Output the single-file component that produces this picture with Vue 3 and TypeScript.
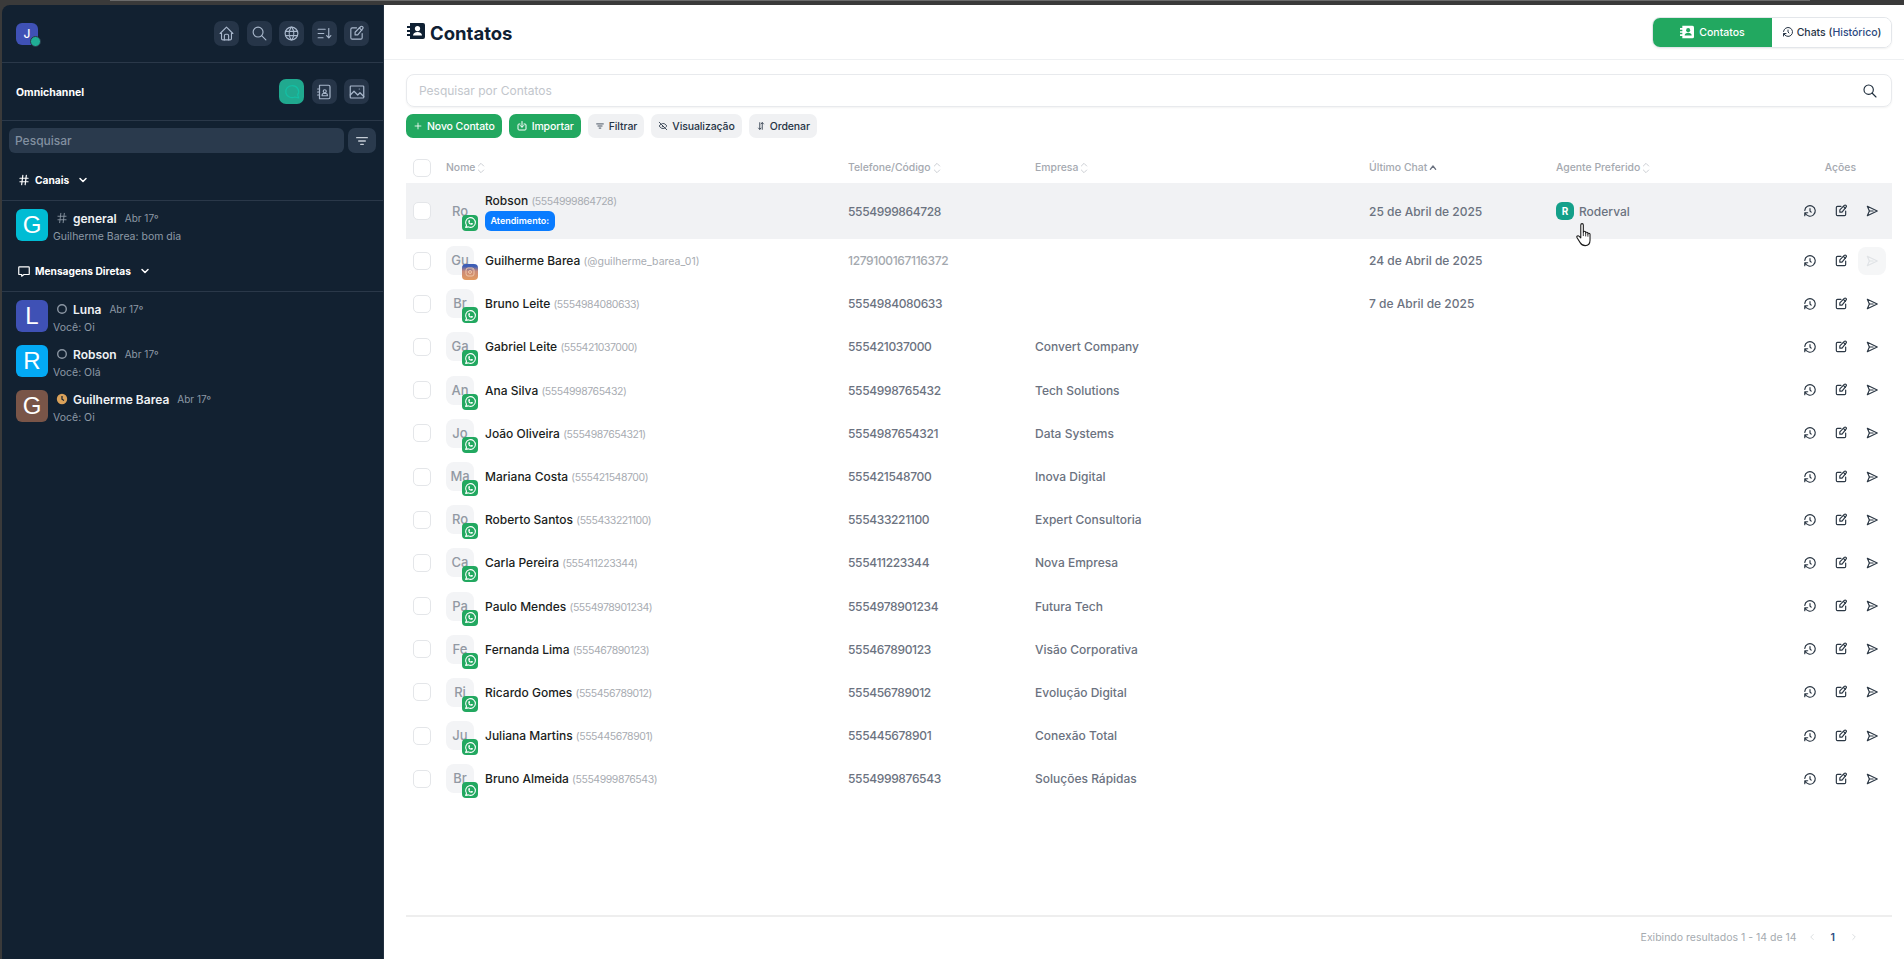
<template>
  <div class="app">
    <aside class="sidebar">
      <div class="side-top">
        <div class="logo">J<span class="logo-dot"></span></div>
        <div class="icon-btns">
          <button v-for="n in topIcons" :key="n" class="side-btn"><Icon :name="n" class="i17" /></button>
        </div>
      </div>
      <div class="side-mode">
        <span class="mode-title">Omnichannel</span>
        <div class="icon-btns">
          <button class="side-btn active"><Icon name="bubble" class="i18" /></button>
          <button class="side-btn"><Icon name="book" class="i18" /></button>
          <button class="side-btn"><Icon name="image" class="i18" /></button>
        </div>
      </div>
      <div class="side-search">
        <div class="side-input">Pesquisar</div>
        <button class="side-filter"><Icon name="filter" class="i16" /></button>
      </div>
      <div class="section-head">
        <Icon name="hash" class="i14" /><span>Canais</span><Icon name="chevron" class="i12 chev" />
      </div>
      <div class="conv-list channel">
        <div class="conv">
          <div class="conv-avatar" style="background: #00bcd4">G</div>
          <div class="conv-text">
            <div class="conv-line"><Icon name="hash" class="i14 conv-hash" /><b>general</b><em>Abr 17º</em></div>
            <div class="conv-sub">Guilherme Barea: bom dia</div>
          </div>
        </div>
      </div>
      <div class="section-head dm">
        <Icon name="comment" class="i14" /><span>Mensagens Diretas</span><Icon name="chevron" class="i12 chev" />
      </div>
      <div class="conv-list">
        <div v-for="c in directs" :key="c.name" class="conv">
          <div class="conv-avatar" :style="{ background: c.color }">{{ c.name[0] }}</div>
          <div class="conv-text">
            <div class="conv-line">
              <svg v-if="c.away" class="status" viewBox="0 0 12 12"><circle cx="6" cy="6" r="5.2" fill="#d9a15a" /><path d="M6 3v3.2l2 1.2" fill="none" stroke="#122131" stroke-width="1.2" /></svg>
              <svg v-else class="status" viewBox="0 0 12 12"><circle cx="6" cy="6" r="4.3" fill="none" stroke="#8b96a3" stroke-width="1.4" /></svg>
              <b>{{ c.name }}</b><em>Abr 17º</em>
            </div>
            <div class="conv-sub">{{ c.last }}</div>
          </div>
        </div>
      </div>
    </aside>

    <main class="main">
      <header class="main-head">
        <h1><svg class="title-icon" viewBox="0 0 18 18"><path d="M3 1h13a2 2 0 0 1 2 2v12a2 2 0 0 1-2 2H3z" fill="#0f2033" /><path d="M0 4h4v2H0zM0 8h4v2H0zM0 12h4v2H0z" fill="#0f2033" /><circle cx="10.5" cy="6.6" r="2.6" fill="#fff" /><path d="M6 13.5c0-2.400 2-3.600 4.500-3.600s4.500 1.200 4.500 3.600z" fill="#fff" /></svg>Contatos</h1>
        <div class="tabs">
          <button class="tab on"><svg class="i14" viewBox="0 0 18 18"><path d="M3 1h13a2 2 0 0 1 2 2v12a2 2 0 0 1-2 2H3z" fill="#fff" /><path d="M0 4h4v2H0zM0 8h4v2H0zM0 12h4v2H0z" fill="#fff" /><circle cx="10.500" cy="6.600" r="2.600" fill="#22a860" /><path d="M6 13.500c0-2.400 2-3.600 4.500-3.600s4.500 1.200 4.500 3.600z" fill="#22a860" /></svg>Contatos</button>
          <button class="tab"><Icon name="history" class="i12" /><span>Chats (<span class="blue">Histórico</span>)</span></button>
        </div>
      </header>

      <div class="content">
        <div class="search">
          <span>Pesquisar por Contatos</span>
          <Icon name="search" class="i16 search-ic" />
        </div>
        <div class="toolbar">
          <button class="tbtn green"><Icon name="plus" class="i10" />Novo Contato</button>
          <button class="tbtn green"><Icon name="import" class="i12" />Importar</button>
          <button class="tbtn"><Icon name="filter" class="i10" />Filtrar</button>
          <button class="tbtn"><Icon name="eyeoff" class="i10" />Visualização</button>
          <button class="tbtn"><Icon name="updown" class="i10" />Ordenar</button>
        </div>

        <div class="table">
          <div class="row thead">
            <span class="check"></span>
            <span v-for="h in headers" :key="h" class="th">{{ h }}<Icon :name="h === 'Último Chat' ? 'sortup' : 'sort'" class="i16 sort" :class="{ dark: h === 'Último Chat' }" /></span>
            <span class="th acoes">Ações</span>
          </div>
          <div v-for="(r, idx) in rows" :key="r.name" class="row tr" :class="{ first: idx === 0 }">
            <span class="check"></span>
            <div class="who">
              <div class="avatar">
                {{ r.name.slice(0, 2) }}
                <span v-if="r.insta" class="badge insta"><Icon name="insta" class="i12" /></span>
                <span v-else class="badge wa"><Icon name="whatsapp" class="i13" /></span>
              </div>
              <div>
                <div class="name">{{ r.name }} <small :class="{ num: !r.handle }">({{ r.handle || r.phone }})</small></div>
                <div v-if="idx === 0" class="tag">Atendimento:</div>
              </div>
            </div>
            <span class="cell phone" :class="{ muted: r.insta }">{{ r.phone }}</span>
            <span class="cell">{{ r.company }}</span>
            <span class="cell">{{ r.last }}</span>
            <span class="cell agent"><template v-if="idx === 0"><i class="agent-av">R</i>Roderval</template></span>
            <div class="actions">
              <Icon name="history" class="i14" />
              <Icon name="edit" class="i14" />
              <span class="send" :class="{ off: r.insta }"><Icon name="send" class="i14" /></span>
            </div>
          </div>
        </div>

        <footer class="pager">
          <span class="pager-text">Exibindo resultados 1 - 14 de 14</span>
          <Icon name="chevleft" class="i10 pg" />
          <b>1</b>
          <Icon name="chevright" class="i10 pg" />
        </footer>
      </div>
    </main>

    <svg class="cursor" viewBox="0 0 16 24">
      <path d="M4.500 2.500c0-1.600 2.400-1.600 2.400 0v7c0-1.400 2.200-1.400 2.200 0v.8c0-1.300 2.100-1.300 2.100.1v.7c0-1.200 2-1.100 2 .3v5.600c0 3-1.800 5-4.600 5-2.500 0-3.600-1-4.700-2.800L1 14.500c-.8-1.300.8-2.500 2-1.300l1.500 1.500z" fill="#fff" stroke="#1a1a1a" stroke-width="1" stroke-linejoin="round" />
      <path d="M6.900 9.500v3.500M9.100 10.300v3M11.200 11.100v2.500" fill="none" stroke="#1a1a1a" stroke-width=".8" />
    </svg>
  </div>
</template>

<script setup lang="ts">
import { h } from 'vue'

const icons: Record<string, string[]> = {
  home: ['M5 12H3l9-9 9 9h-2', 'M5 12v7a2 2 0 0 0 2 2h10a2 2 0 0 0 2-2v-7', 'M9 21v-6a2 2 0 0 1 2-2h2a2 2 0 0 1 2 2v6'],
  search: ['M3 10a7 7 0 1 0 14 0a7 7 0 1 0-14 0', 'M21 21l-6-6'],
  world: ['M3 12a9 9 0 1 0 18 0a9 9 0 0 0-18 0', 'M3.600 9h16.800', 'M3.600 15h16.800', 'M11.500 3a17 17 0 0 0 0 18', 'M12.500 3a17 17 0 0 1 0 18'],
  sortlist: ['M3 6h10', 'M3 12h8', 'M3 18h7', 'M15 15l3 3 3-3', 'M18 5v13'],
  edit: ['M12 4H6a2 2 0 0 0-2 2v12a2 2 0 0 0 2 2h12a2 2 0 0 0 2-2v-6', 'M20.600 5.400a2 2 0 0 0-2.900-2.900L10 10.200V14h3.800z', 'M16 4l3.500 3.500'],
  bubble: ['M12 3.500a8.500 8 0 1 0 3.800 15.200L21 20l-1.500-4.200A8.500 8 0 0 0 12 3.500z'],
  book: ['M6 3h12a2 2 0 0 1 2 2v14a2 2 0 0 1-2 2H6z', 'M3.500 8H6', 'M3.500 12H6', 'M3.500 16H6', 'M11 11a2 2 0 1 0 4 0a2 2 0 1 0-4 0', 'M9.500 17h7v-1a2 2 0 0 0-2-2h-3a2 2 0 0 0-2 2z'],
  image: ['M3 5a1 1 0 0 1 1-1h16a1 1 0 0 1 1 1v14a1 1 0 0 1-1 1H4a1 1 0 0 1-1-1z', 'M3 16l5-5 5 5 3-3 5 5', 'M15 8h.01'],
  filter: ['M4 7h16', 'M7 12h10', 'M10 17h4'],
  hash: ['M5 9h14', 'M5 15h14', 'M10 4L8 20', 'M16 4l-2 16'],
  chevron: ['M6 9l6 6 6-6'],
  chevleft: ['M15 6l-6 6 6 6'],
  chevright: ['M9 6l6 6-6 6'],
  comment: ['M4 5h16a1 1 0 0 1 1 1v11a1 1 0 0 1-1 1h-8l-4 3v-3H4a1 1 0 0 1-1-1V6a1 1 0 0 1 1-1z'],
  history: ['M12 8v4l2 2', 'M3.050 11a9 9 0 1 1 .5 4m-.5 5v-5h5'],
  plus: ['M12 5v14', 'M5 12h14'],
  import: ['M8 8H6a2 2 0 0 0-2 2v8a2 2 0 0 0 2 2h12a2 2 0 0 0 2-2v-8a2 2 0 0 0-2-2h-2', 'M12 3v11', 'M8.500 11l3.500 3.500 3.500-3.500'],
  eyeoff: ['M10.585 10.587a2 2 0 0 0 2.829 2.828', 'M16.681 16.673A8.717 8.717 0 0 1 12 18c-3.600 0-6.600-2-9-6 1.272-2.120 2.712-3.678 4.320-4.674m2.860-1.146A9.055 9.055 0 0 1 12 6c3.600 0 6.600 2 9 6-.666 1.110-1.379 2.067-2.138 2.870', 'M3 3l18 18'],
  updown: ['M9 4v16', 'M6 17l3 3 3-3', 'M15 20V4', 'M12 7l3-3 3 3'],
  sort: ['M8 9l4-4 4 4', 'M16 15l-4 4-4-4'],
  sortup: ['M8 14l4-5 4 5'],
  send: ['M4 4l17 8-17 8 3.500-8z', 'M7.500 12H14'],
  whatsapp: ['M3 21l1.650-3.800a9 9 0 1 1 3.400 2.900L3 21', 'M9 10a.5.5 0 0 0 1 0V9a.5.5 0 0 0-1 0v1a5 5 0 0 0 5 5h1a.5.5 0 0 0 0-1h-1a.5.5 0 0 0 0 1'],
  insta: ['M4 8a4 4 0 0 1 4-4h8a4 4 0 0 1 4 4v8a4 4 0 0 1-4 4H8a4 4 0 0 1-4-4z', 'M9 12a3 3 0 1 0 6 0a3 3 0 1 0-6 0', 'M16.500 7.500v.01']
}

const Icon = (props: { name: string }) =>
  h(
    'svg',
    { viewBox: '0 0 24 24', fill: 'none', stroke: 'currentColor', 'stroke-width': 2, 'stroke-linecap': 'round', 'stroke-linejoin': 'round' },
    icons[props.name].map((d) => h('path', { d }))
  )
Icon.props = ['name']

const topIcons = ['home', 'search', 'world', 'sortlist', 'edit']

const directs = [
  { name: 'Luna', last: 'Você: Oi', color: '#3f51b5', away: false },
  { name: 'Robson', last: 'Você: Olá', color: '#03a9f4', away: false },
  { name: 'Guilherme Barea', last: 'Você: Oi', color: '#795548', away: true }
]

const headers = ['Nome', 'Telefone/Código', 'Empresa', 'Último Chat', 'Agente Preferido']

const rows = [
  { name: 'Robson', phone: '5554999864728', company: '', last: '25 de Abril de 2025' },
  { name: 'Guilherme Barea', handle: '@guilherme_barea_01', phone: '1279100167116372', company: '', last: '24 de Abril de 2025', insta: true },
  { name: 'Bruno Leite', phone: '5554984080633', company: '', last: '7 de Abril de 2025' },
  { name: 'Gabriel Leite', phone: '555421037000', company: 'Convert Company', last: '' },
  { name: 'Ana Silva', phone: '5554998765432', company: 'Tech Solutions', last: '' },
  { name: 'João Oliveira', phone: '5554987654321', company: 'Data Systems', last: '' },
  { name: 'Mariana Costa', phone: '555421548700', company: 'Inova Digital', last: '' },
  { name: 'Roberto Santos', phone: '555433221100', company: 'Expert Consultoria', last: '' },
  { name: 'Carla Pereira', phone: '555411223344', company: 'Nova Empresa', last: '' },
  { name: 'Paulo Mendes', phone: '5554978901234', company: 'Futura Tech', last: '' },
  { name: 'Fernanda Lima', phone: '555467890123', company: 'Visão Corporativa', last: '' },
  { name: 'Ricardo Gomes', phone: '555456789012', company: 'Evolução Digital', last: '' },
  { name: 'Juliana Martins', phone: '555445678901', company: 'Conexão Total', last: '' },
  { name: 'Bruno Almeida', phone: '5554999876543', company: 'Soluções Rápidas', last: '' }
]
</script>

<style>
html, body { margin: 0; background: #3a3a3a; overflow: hidden; }
</style>

<style scoped>
.app {
  position: relative;
  display: flex;
  height: 959px;
  box-sizing: border-box;
  padding: 5px 0 0 2px;
  background: linear-gradient(#6b6b6b, #6b6b6b) 110px 0 / 1700px 1px no-repeat, #3a3a3a;
  font-family: Inter, "Noto Sans", sans-serif;
}
button { font-family: inherit; border: 0; padding: 0; cursor: pointer; }
.i10 { width: 10px; height: 10px; flex: none; }
.i12 { width: 12px; height: 12px; flex: none; }
.i13 { width: 13px; height: 13px; flex: none; }
.i14 { width: 14px; height: 14px; flex: none; }
.i16 { width: 16px; height: 16px; flex: none; }
.i17 { width: 17px; height: 17px; flex: none; }
.i18 { width: 18px; height: 18px; flex: none; }

/* sidebar */
.sidebar {
  width: 382px;
  flex: none;
  background: #122131;
  border-top-left-radius: 8px;
  color: #fff;
  box-sizing: border-box;
  border-right: 1px solid #22303f;
}
.side-top, .side-mode {
  display: flex;
  align-items: center;
  justify-content: space-between;
  padding: 0 14px;
  border-bottom: 1px solid #2a3849;
  box-sizing: border-box;
}
.side-top { height: 58px; }
.side-mode { height: 58px; }
.logo {
  position: relative;
  width: 22px;
  height: 22px;
  border-radius: 6px;
  background: #3f51b5;
  text-align: center;
  font-size: 12px;
  line-height: 22px;
  font-weight: 500;
}
.logo-dot {
  position: absolute;
  right: -3px;
  bottom: -2px;
  width: 9px;
  height: 9px;
  border-radius: 50%;
  background: #20ad95;
  border: 1px solid #2a3849;
}
.icon-btns { display: flex; gap: 7.5px; }
.side-btn {
  width: 25px;
  height: 25px;
  border-radius: 7px;
  background: #263548;
  color: #a9b8cc;
  display: flex;
  align-items: center;
  justify-content: center;
}
.side-btn svg { stroke-width: 1.6; }
.side-btn.active { background: #20a98f; color: #14c0a5; }
.mode-title { font-size: 10.5px; font-weight: 700; padding-top: 2px; }
.side-search {
  display: flex;
  gap: 4px;
  padding: 7px 7px 0;
}
.side-input {
  flex: 1;
  height: 25px;
  line-height: 25px;
  padding-left: 6px;
  border-radius: 6px;
  background: #2a3a4d;
  color: #8290a0;
  font-size: 12px;
  font-weight: 500;
}
.side-filter {
  width: 28px;
  height: 25px;
  border-radius: 7px;
  background: #2a3a4d;
  color: #c5cdd6;
  display: flex;
  align-items: center;
  justify-content: center;
}
.section-head {
  display: flex;
  align-items: center;
  gap: 4px;
  height: 48px;
  padding: 6px 15px 0;
  box-sizing: border-box;
  border-bottom: 1px solid #2a3849;
  font-size: 10.2px;
  font-weight: 700;
}
.section-head.dm { height: 51px; padding-top: 10px; }
.chev { margin-left: 4px; stroke-width: 3; }
.conv-list {
  display: flex;
  flex-direction: column;
  gap: 13px;
  padding: 8px 14px 0;
}
.conv { display: flex; gap: 5px; height: 32px; }
.conv-avatar {
  width: 32px;
  height: 32px;
  border-radius: 6px;
  text-align: center;
  font: 24px/32px "Liberation Sans", sans-serif;
}
.conv-line {
  display: flex;
  align-items: center;
  height: 18px;
  padding-left: 2px;
  gap: 4px;
}
.conv-line b { font-size: 12px; font-weight: 600; color: #eef1f4; }
.conv-line em { font-style: normal; font-size: 10px; color: #8d99a6; margin-left: 4px; }
.conv-hash { color: #8d99a6; stroke-width: 1.5; }
.status { width: 12px; height: 12px; flex: none; margin: 0 1px; }
.conv-sub { font-size: 10.5px; line-height: 13px; margin-top: 2.5px; color: #8d99a6; }

/* main */
.main {
  flex: 1;
  min-width: 0;
  background: #fff;
  display: flex;
  flex-direction: column;
}
.main-head {
  display: flex;
  align-items: center;
  justify-content: space-between;
  height: 55px;
  box-sizing: border-box;
  padding: 0 12px 0 23px;
  border-bottom: 1px solid #eef0f2;
}
h1 {
  display: flex;
  align-items: center;
  gap: 5px;
  margin: 0;
  padding-top: 1px;
  font-size: 18.5px;
  font-weight: 700;
  color: #0f2033;
}
.title-icon { width: 18px; height: 18px; margin-top: -4px; }
.tabs {
  display: flex;
  height: 31px;
  width: 240px;
  border: 1px solid #e3e6ea;
  border-radius: 8px;
  overflow: hidden;
  box-sizing: border-box;
  box-shadow: 0 1px 2px rgba(0, 0, 0, 0.06);
}
.tab {
  display: flex;
  align-items: center;
  justify-content: center;
  gap: 3px;
  flex: 1;
  background: #fff;
  font-size: 10.5px;
  font-weight: 500;
  color: #273445;
}
.tab.on { flex: none; width: 119px; background: #22a860; color: #fff; gap: 5px; }
.blue { color: #2b4a82; }
.content {
  flex: 1;
  display: flex;
  flex-direction: column;
  min-height: 0;
  padding: 14px 12px 0 22px;
}
.search {
  display: flex;
  align-items: center;
  justify-content: space-between;
  height: 33px;
  box-sizing: border-box;
  padding: 0 13px 0 12px;
  border: 1px solid #e8eaed;
  border-radius: 8px;
  box-shadow: 0 1px 2px rgba(0, 0, 0, 0.05);
  font-size: 12px;
  color: #c2c6cc;
}
.search-ic { color: #1c2b3a; stroke-width: 1.7; }
.toolbar { display: flex; gap: 7px; margin-top: 7px; }
.tbtn {
  display: flex;
  align-items: center;
  gap: 4px;
  height: 24px;
  padding: 0 7px;
  border-radius: 7px;
  background: #f0f1f3;
  color: #273445;
  font-size: 10.5px;
  font-weight: 500;
  letter-spacing: -0.1px;
}
.tbtn.green { background: #22a860; color: #fff; }

/* table */
.table { flex: 1; margin-top: 14px; }
.row {
  display: grid;
  grid-template-columns: 40px 402px 187px 334px 187px 1fr 136px;
  align-items: center;
}
.thead { height: 31px; }
.th {
  display: flex;
  align-items: center;
  font-size: 10.4px;
  font-weight: 500;
  color: #a5a9b0;
}
.sort { color: #cdd0d5; stroke-width: 1.5; margin-left: -2px; }
.sort.dark { color: #6b7280; stroke-width: 2; }
.acoes { justify-content: flex-end; padding-right: 36px; }
.tr { height: 43.2px; }
.tr.first { height: 56px; background: #f1f2f4; }
.check {
  justify-self: start;
  margin-left: 7px;
  width: 18px;
  height: 18px;
  box-sizing: border-box;
  border: 1px solid #e4e6e9;
  border-radius: 5px;
  background: #fff;
}
.who { display: flex; align-items: center; gap: 11px; }
.avatar {
  position: relative;
  width: 28px;
  height: 29px;
  border-radius: 8px;
  background: #f3f4f6;
  color: #9299a3;
  font-size: 13px;
  font-weight: 500;
  line-height: 29px;
  text-align: center;
}
.first .avatar { background: transparent; }
.badge {
  position: absolute;
  right: -4px;
  bottom: -5px;
  width: 16px;
  height: 16px;
  border-radius: 4px;
  display: flex;
  align-items: center;
  justify-content: center;
  color: #fff;
}
.wa { background: #22a860; }
.insta { background: linear-gradient(180deg, #3a5cb8 0%, #3f5fb5 15%, #c98a78 45%, #e39a5e 100%); color: #eec6a8; }
.name { font-size: 12px; font-weight: 500; color: #1a1d21; }
.first .name { padding-top: 1px; }
.name small { font-size: 10.5px; font-weight: 400; color: #a8acb2; }
.name small.num { letter-spacing: -0.44px; }
.tag {
  display: inline-block;
  margin-top: 3px;
  padding: 0 5.5px;
  height: 20px;
  line-height: 20px;
  border-radius: 6px;
  background: #0a7cff;
  color: #fff;
  font-size: 9px;
  font-weight: 600;
}
.cell { font-size: 12px; font-weight: 500; color: #6b7280; }
.cell.phone { letter-spacing: -0.35px; }
.cell.muted { color: #a3a8ae; }
.agent { display: flex; align-items: center; gap: 5px; }
.agent-av {
  width: 18px;
  height: 18px;
  border-radius: 6px;
  background: #14a08a;
  color: #fff;
  font-style: normal;
  font-size: 10px;
  font-weight: 700;
  line-height: 18px;
  text-align: center;
}
.actions {
  display: flex;
  align-items: center;
  justify-content: flex-end;
  gap: 17px;
  padding-right: 13px;
  color: #2b3744;
}
.send {
  display: flex;
  align-items: center;
  justify-content: center;
  width: 14px;
  height: 28px;
}
.send.off {
  width: 28px;
  margin: 0 -7px;
  border-radius: 8px;
  background: #f5f6f7;
  color: #e0e3e6;
}
.pager {
  display: flex;
  align-items: center;
  justify-content: flex-end;
  gap: 14px;
  height: 40px;
  margin-bottom: 2px;
  padding-right: 33px;
  border-top: 2px solid #eeeeee;
  font-size: 10.5px;
  color: #a5abb0;
}
.pager-text { margin-right: -4px; }
.pager b { font-weight: 600; color: #2b4a82; }
.pg { color: #d5d8db; }
.cursor {
  position: absolute;
  left: 1576px;
  top: 222px;
  width: 17px;
  height: 26px;
}
</style>
